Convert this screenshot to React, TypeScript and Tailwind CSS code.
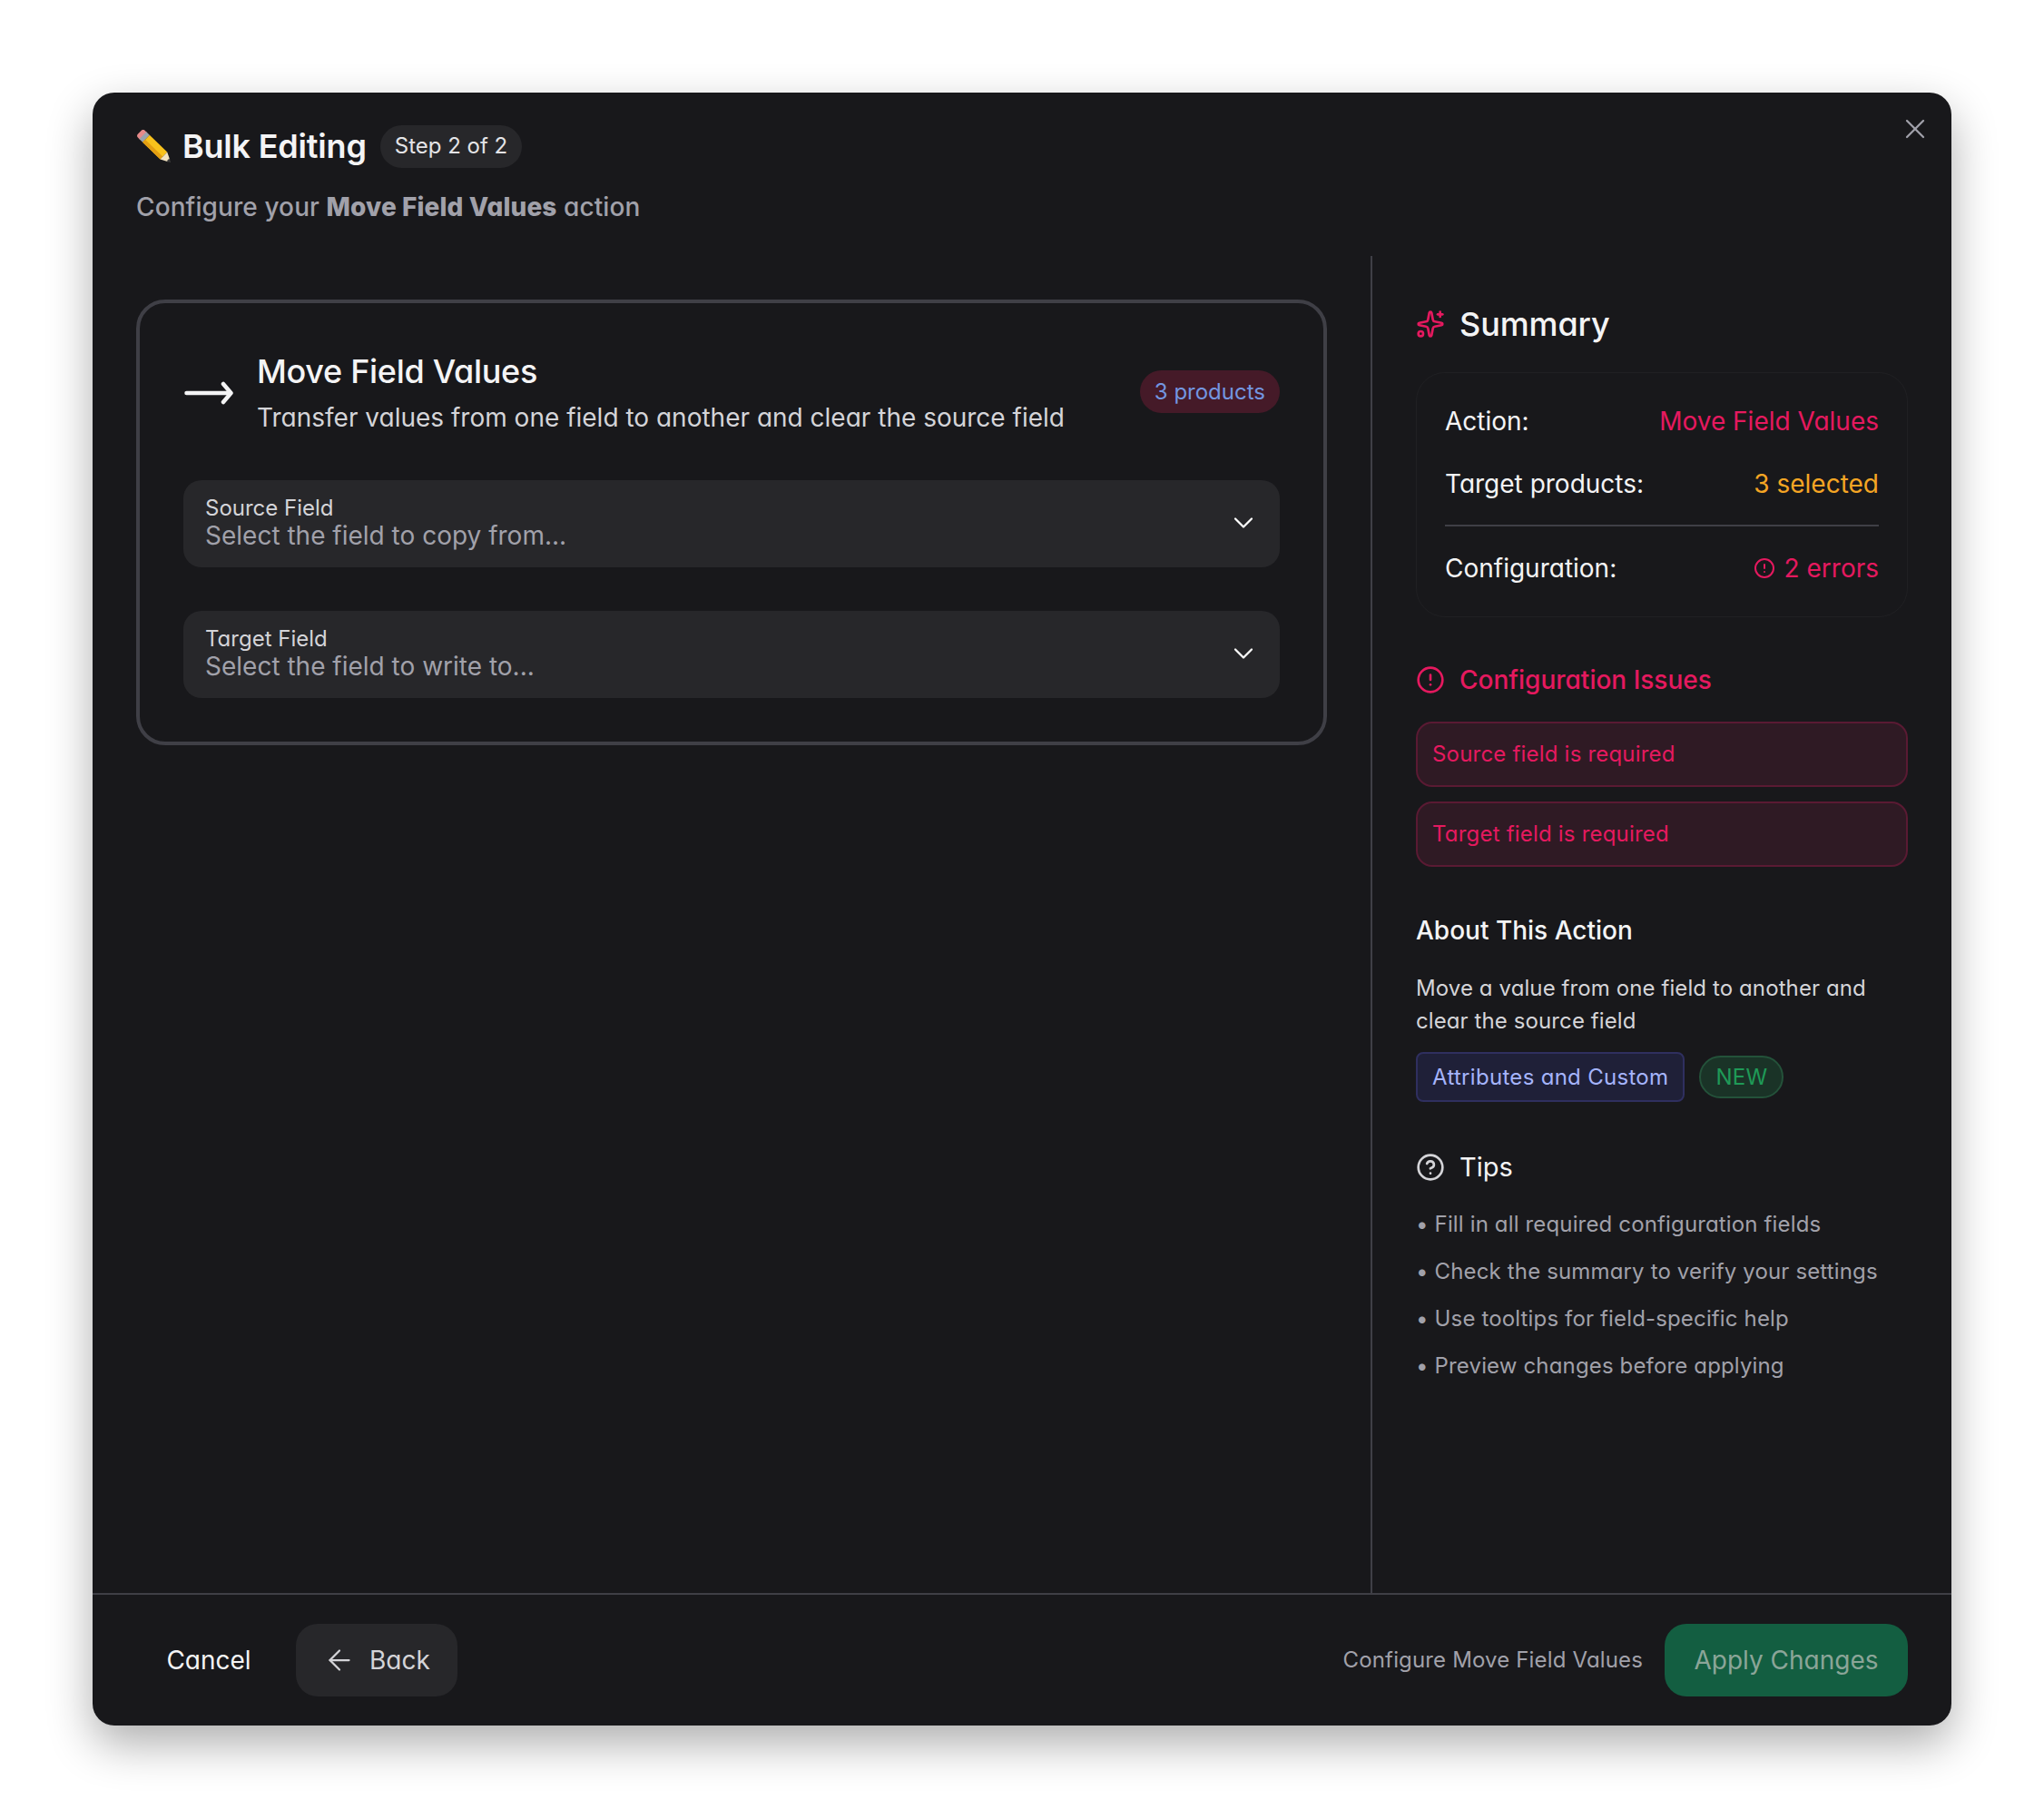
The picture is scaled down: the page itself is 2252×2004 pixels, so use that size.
import React from 'react';
import { ArrowLeft, ChevronDown, CircleAlert, CircleHelp, Sparkles, X } from 'lucide-react';

const PencilIcon = () => (
  <svg width="38" height="36" viewBox="0 0 38 36" className="shrink-0">
    <g transform="translate(4.5 3.5) rotate(44)">
      <rect x="-1" y="-5.5" width="8" height="11" rx="3" fill="#e58a8a" />
      <rect x="4" y="-5.5" width="5" height="11" fill="#9aa3ad" />
      <rect x="9" y="-5.5" width="27" height="11" fill="#f8c21c" />
      <rect x="9" y="1.5" width="27" height="4" fill="#e39e12" />
      <path d="M36 -5.5 L44 -1.5 L44 1.5 L36 5.5 Z" fill="#f3e3c0" />
      <path d="M42.5 -2 L47 0 L42.5 2 Z" fill="#3a3a3a" />
    </g>
  </svg>
);

const MoveArrow = () => (
  <svg width="54" height="26" viewBox="0 0 54 26" fill="none" stroke="#f4f4f5" strokeWidth="4.5" strokeLinecap="round" strokeLinejoin="round" className="shrink-0 mt-[3px]">
    <path d="M2.5 13H51" />
    <path d="M43 3l8.5 10-8.5 10" />
  </svg>
);

const SelectField = ({ label, placeholder }: { label: string; placeholder: string }) => (
  <div className="h-[96px] w-full rounded-[20px] bg-[#27272a] pl-6 pr-[22px] flex items-center justify-between">
    <div className="flex flex-col pb-[3px]">
      <span className="text-[24px] leading-[28px] text-[#d4d4d8]">{label}</span>
      <span className="text-[28px] leading-[32px] text-[#a1a1aa]">{placeholder}</span>
    </div>
    <ChevronDown size={36} strokeWidth={1.5} className="text-white mb-[2px]" />
  </div>
);

const SummaryRow = ({ label, children }: { label: string; children: React.ReactNode }) => (
  <div className="flex items-center justify-between text-[28px] leading-[40px]">
    <span className="text-[#f4f4f5]">{label}</span>
    {children}
  </div>
);

const ErrorBox = ({ text }: { text: string }) => (
  <div className="h-[72px] rounded-[18px] border-2 border-[#5a1a33] bg-[#2f1a24] px-4 flex items-center text-[24px] tracking-[0.2px] text-[#e5195f]">
    {text}
  </div>
);

const tips = [
  'Fill in all required configuration fields',
  'Check the summary to verify your settings',
  'Use tooltips for field-specific help',
  'Preview changes before applying',
];

export default function App() {
  return (
    <div className="bg-white w-[2252px] h-[2004px] p-[102px] font-['Inter',sans-serif] [font-feature-settings:'cv11']">
      <div className="relative w-[2048px] h-[1799px] rounded-[24px] bg-[#18181b] shadow-[0_20px_50px_rgba(0,0,0,0.32)] flex flex-col overflow-hidden">
        <button className="absolute right-[22px] top-[22px] text-[#a1a1aa]">
          <X size={36} strokeWidth={1.5} />
        </button>

        {/* Header */}
        <div className="h-[180px] shrink-0 px-12 pt-[35px]">
          <div className="flex items-center h-[48px]">
            <PencilIcon />
            <h1 className="ml-[13px] text-[36px] font-semibold tracking-[-0.2px] text-[#f4f4f5]">Bulk Editing</h1>
            <span className="ml-[15px] h-[47px] px-4 rounded-full bg-[#27272a] flex items-center text-[24px] text-[#e4e4e7]">Step 2 of 2</span>
          </div>
          <p className="mt-[23px] text-[28px] leading-[40px] font-medium tracking-[0.1px] text-[#a1a1aa]">
            Configure your <span className="font-extrabold">Move Field Values</span> action
          </p>
        </div>

        {/* Body */}
        <div className="flex-1 flex min-h-0">
          <div className="w-[1410px] shrink-0 border-r-2 border-[#3f3f46] p-12">
            <div className="rounded-[32px] border-4 border-[#3f3f46] p-12">
              <div className="flex items-center justify-between h-[99px] mb-[48px]">
                <div className="flex items-center pl-[1px]">
                  <MoveArrow />
                  <div className="ml-[26px] mt-[6px]">
                    <h2 className="text-[36px] leading-[48px] font-medium tracking-[-0.3px] text-[#f4f4f5]">Move Field Values</h2>
                    <p className="mt-[3px] text-[28px] leading-[48px] text-[#d4d4d8]">Transfer values from one field to another and clear the source field</p>
                  </div>
                </div>
                <span className="h-[47px] px-4 rounded-full bg-[#451a28] flex items-center text-[24px] text-[#7396e0]">3 products</span>
              </div>
              <div className="flex flex-col gap-12">
                <SelectField label="Source Field" placeholder="Select the field to copy from..." />
                <SelectField label="Target Field" placeholder="Select the field to write to..." />
              </div>
            </div>
          </div>

          <div className="flex-1 px-12 pt-12">
            <div className="flex items-center h-[54px] gap-4">
              <Sparkles size={32} strokeWidth={2} className="text-[#e5195f]" />
              <h3 className="text-[36px] font-medium tracking-[-0.1px] text-[#f4f4f5]">Summary</h3>
            </div>
            <div className="mt-[26px] rounded-[32px] border border-[#202023] px-[31px] pt-[33px] pb-[33px] flex flex-col">
              <SummaryRow label="Action:"><span className="text-[#e5195f]">Move Field Values</span></SummaryRow>
              <div className="mt-[29px]">
                <SummaryRow label="Target products:"><span className="text-[#f5a524]">3 selected</span></SummaryRow>
              </div>
              <div className="mt-[25px] h-[2px] bg-[#3f3f46]" />
              <div className="mt-[26px]">
                <SummaryRow label="Configuration:">
                  <span className="flex items-center gap-[10px] text-[#e5195f]"><CircleAlert size={24} />2 errors</span>
                </SummaryRow>
              </div>
            </div>

            <div className="mt-[49px] flex items-center gap-4 h-[40px]">
              <CircleAlert size={32} className="text-[#e5195f]" />
              <span className="text-[28px] font-medium text-[#e5195f]">Configuration Issues</span>
            </div>
            <div className="mt-[26px] flex flex-col gap-4">
              <ErrorBox text="Source field is required" />
              <ErrorBox text="Target field is required" />
            </div>

            <h4 className="mt-[50px] text-[28px] leading-[40px] font-medium text-[#f4f4f5]">About This Action</h4>
            <p className="mt-[26px] text-[24px] leading-[36px] tracking-[0.1px] text-[#d4d4d8]">Move a value from one field to another and clear the source field</p>
            <div className="mt-[16px] flex items-center gap-4">
              <span className="h-[55px] px-4 rounded-[8px] border-2 border-[#2f2f5f] bg-[#1f2038] flex items-center text-[24px] tracking-[0.3px] text-[#a5b4fc]">Attributes and Custom</span>
              <span className="h-[47px] px-4 rounded-full border-2 border-[#24523a] bg-[#1a3327] flex items-center text-[24px] tracking-[0.3px] text-[#1f9a57]">NEW</span>
            </div>

            <div className="mt-[52px] flex items-center gap-4 h-[40px]">
              <CircleHelp size={32} className="text-[#d4d4d8]" />
              <span className="text-[29px] font-normal text-[#f4f4f5]">Tips</span>
            </div>
            <ul className="mt-[25px] flex flex-col gap-4 text-[24px] leading-[36px] tracking-[0.15px] text-[#a1a1aa]">
              {tips.map(t => (
                <li key={t}>• {t}</li>
              ))}
            </ul>
          </div>
        </div>

        {/* Footer */}
        <div className="h-[146px] shrink-0 border-t-2 border-[#3f3f46] px-12 flex items-center justify-between">
          <div className="flex items-center gap-4">
            <button className="h-[80px] w-[160px] rounded-[24px] text-[28px] text-[#f4f4f5]">Cancel</button>
            <button className="h-[80px] w-[178px] rounded-[24px] bg-[#27272a] pl-[30px] flex items-center gap-[15px] text-[28px] text-[#d4d4d8]">
              <ArrowLeft size={36} strokeWidth={1.5} />
              Back
            </button>
          </div>
          <div className="flex items-center gap-6">
            <span className="text-[24px] tracking-[0.15px] text-[#a1a1aa]">Configure Move Field Values</span>
            <button className="h-[80px] w-[268px] rounded-[24px] bg-[#135e41] text-[28px] text-[#8ba598]">Apply Changes</button>
          </div>
        </div>
      </div>
    </div>
  );
}
